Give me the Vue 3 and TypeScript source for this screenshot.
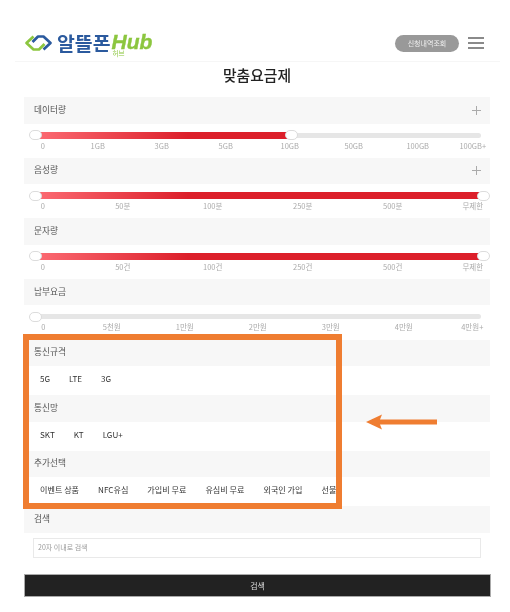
<script setup lang="ts">
interface Slider {
  title: string
  plus: boolean
  labels: string[]
  end: number
  edge: number
  step: number
}
const sliders: Slider[] = [
  { title: '데이터량', plus: true, end: 4 / 7, edge: 46, step: 64, labels: ['0', '1GB', '3GB', '5GB', '10GB', '50GB', '100GB', '100GB+'] },
  { title: '음성량', plus: true, end: 1, edge: 70, step: 90, labels: ['0', '50분', '100분', '250분', '500분', '무제한'] },
  { title: '문자량', plus: false, end: 1, edge: 70, step: 90, labels: ['0', '50건', '100건', '250건', '500건', '무제한'] },
  { title: '납부요금', plus: false, end: 0, edge: 64, step: 73, labels: ['0', '5천원', '1만원', '2만원', '3만원', '4만원', '4만원+'] },
]
const groups = [
  { title: '통신규격', items: ['5G', 'LTE', '3G'] },
  { title: '통신망', items: ['SKT', 'KT', 'LGU+'] },
  { title: '추가선택', items: ['이벤트 상품', 'NFC유심', '가입비 무료', '유심비 무료', '외국인 가입', '선불'] },
]
const RANGE = 448
const tickColumns = (s: Slider): string =>
  `${s.edge}px repeat(${s.labels.length - 2}, ${s.step}px) ${s.edge}px`
</script>

<template>
  <div class="page">
    <header class="top">
      <div class="logo">
        <svg class="mark" width="29" height="18" viewBox="0 0 29 18" fill="none">
          <path d="M9.5 2.5 L2.5 9 L9.5 15.5 L15 15.5 L20.5 10" stroke="#8cc63f" stroke-width="2.7" stroke-linejoin="round" />
          <path d="M19.5 15.5 L26.5 9 L19.5 2.5 L14 2.5 L8.5 8" stroke="#2b5a9e" stroke-width="2.7" stroke-linejoin="round" />
        </svg>
        <span class="ko">알뜰폰</span>
        <span class="hub">Hub<small>허브</small></span>
      </div>
      <div class="actions">
        <span class="pill">신청내역조회</span>
        <span class="burger"><i></i><i></i><i></i></span>
      </div>
    </header>

    <h1 class="title">맞춤요금제</h1>

    <section v-for="s in sliders" :key="s.title" class="block">
      <div class="head">
        <span>{{ s.title }}</span>
        <svg v-if="s.plus" width="9" height="9" viewBox="0 0 9 9"><path d="M4.5 0V9M0 4.5H9" stroke="#aaa" stroke-width="1" /></svg>
      </div>
      <div class="slider">
        <div class="rail">
          <div class="fill" :style="{ width: s.end * RANGE - 3 + 'px' }"></div>
          <span class="thumb" :style="{ left: '0px' }"></span>
          <span v-if="s.end > 0" class="thumb" :style="{ left: s.end * RANGE + 'px' }"></span>
        </div>
        <div class="ticks" :style="{ gridTemplateColumns: tickColumns(s) }">
          <span v-for="l in s.labels" :key="l">{{ l }}</span>
        </div>
      </div>
    </section>

    <section v-for="g in groups" :key="g.title" class="block">
      <div class="head"><span>{{ g.title }}</span></div>
      <div class="options">
        <span v-for="o in g.items" :key="o">{{ o }}</span>
      </div>
    </section>

    <section class="block">
      <div class="head"><span>검색</span></div>
      <div class="search">
        <input type="text" placeholder="20자 이내로 검색" />
      </div>
    </section>

    <button class="submit" type="button">검색</button>

    <div class="frame"></div>
    <svg class="arrow" width="72" height="16" viewBox="0 0 72 16">
      <path d="M0 8 L16 0.5 L14 5.5 H71 V10.5 H14 L16 15.5 Z" fill="#ef7d31" />
    </svg>
  </div>
</template>

<style scoped>
.page {
  position: relative;
  width: 510px;
  height: 612px;
  overflow: hidden;
  background: #fff;
  font-family: "Noto Sans CJK KR", "Noto Sans", sans-serif;
  filter: blur(0.35px);
  box-sizing: border-box;
  padding: 0 20px 0 24px;
}
.top {
  display: flex;
  align-items: center;
  justify-content: space-between;
  height: 62px;
  margin: 0 -10px 0 -9px;
  padding: 25px 16px 0 9px;
  box-sizing: border-box;
  border-bottom: 1px solid #f6f6f6;
}
.logo {
  display: flex;
  align-items: center;
}
.mark {
  margin-right: 4px;
}
.ko {
  color: #2b5a9e;
  font-size: 19.4px;
  font-weight: 700;
  line-height: 22px;
}
.hub {
  position: relative;
  color: #8cc63f;
  font-family: "Liberation Sans", sans-serif;
  font-size: 21px;
  font-weight: 700;
  font-style: italic;
  line-height: 16px;
  margin-left: 1px;
  margin-top: -3px;
  -webkit-text-stroke: 0.4px #8cc63f;
}
.hub small {
  position: absolute;
  left: 1px;
  top: 16px;
  font-family: "Noto Sans CJK KR", sans-serif;
  font-size: 6.5px;
  font-style: normal;
  font-weight: 400;
  line-height: 6px;
  white-space: nowrap;
  -webkit-text-stroke: 0;
}
.actions {
  display: flex;
  align-items: center;
  gap: 9px;
}
.pill {
  width: 64px;
  height: 17px;
  border-radius: 9px;
  background: #999;
  color: #eee;
  font-size: 7px;
  line-height: 17px;
  text-align: center;
}
.burger {
  display: flex;
  flex-direction: column;
  gap: 3px;
  width: 16px;
}
.burger i {
  display: block;
  height: 2px;
  background: #8a8a8a;
}
.title {
  margin: 2px 0 12px;
  color: #222;
  font-size: 14.8px;
  font-weight: 500;
  line-height: 21px;
  text-align: center;
}
.block {
  width: 466px;
}
.head {
  display: flex;
  align-items: center;
  justify-content: space-between;
  height: 26.5px;
  padding: 0 9px 2px 10px;
  box-sizing: border-box;
  background: #f7f7f7;
  color: #555;
  font-size: 8.7px;
}
.head svg {
  margin-top: 2px;
}
.slider {
  height: 34.17px;
  padding-top: 9px;
  box-sizing: border-box;
}
.rail {
  position: relative;
  height: 5px;
  margin: 0 9px 0 11px;
  border-radius: 3px;
  background: #e6e6e6;
}
.fill {
  position: absolute;
  left: 3px;
  top: -1px;
  height: 7px;
  background: linear-gradient(90deg, #fb6a72 0, #dc1f2a 150px);
}
.thumb {
  position: absolute;
  top: -2.5px;
  width: 13px;
  height: 10px;
  margin-left: -6.5px;
  border-radius: 6px;
  background: #fff;
  border: 1px solid #dcdcdc;
  box-sizing: border-box;
}
.ticks {
  display: grid;
  justify-content: center;
  justify-items: center;
  margin: 3px 0 0 1.5px;
  color: #aaa;
  font-size: 7.5px;
  line-height: 10px;
  white-space: nowrap;
}
.options {
  display: flex;
  align-items: center;
  gap: 19px;
  width: 312px;
  height: 29px;
  padding: 0 0 4px 16px;
  box-sizing: border-box;
  overflow: hidden;
  color: #333;
  font-size: 8.1px;
  white-space: nowrap;
}
.search {
  height: 41px;
  padding: 5px 9px 0;
  box-sizing: border-box;
}
.search input {
  display: block;
  width: 100%;
  height: 20px;
  padding: 0 4px 2px;
  box-sizing: border-box;
  border: 1px solid #e9e9e9;
  outline: none;
  font: 7px "Noto Sans CJK KR", sans-serif;
}
.search input::placeholder {
  color: #999;
}
.submit {
  display: block;
  width: 467px;
  height: 23px;
  padding: 0;
  border: 1px solid #aaa;
  background: #222;
  color: #ddd;
  font: 8px "Noto Sans CJK KR", sans-serif;
}
.frame {
  position: absolute;
  left: 23px;
  top: 334px;
  width: 319px;
  height: 175px;
  box-sizing: border-box;
  border: 6px solid #ef7d31;
}
.arrow {
  position: absolute;
  left: 366px;
  top: 414px;
}
</style>
